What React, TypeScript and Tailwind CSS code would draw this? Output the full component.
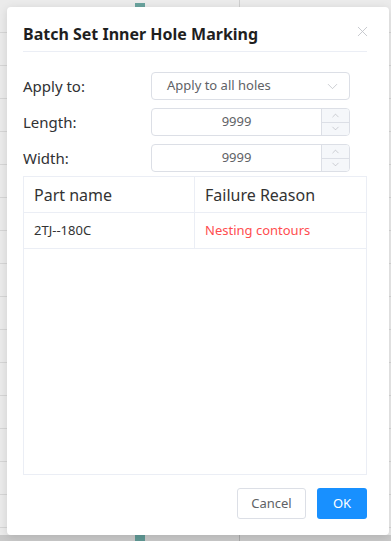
import { ChevronDown, ChevronUp, X } from 'lucide-react';

const font = { fontFamily: '"Noto Sans", "Open Sans", Arial, sans-serif' };

function NumberInput({ value }: { value: string }) {
  return (
    <div className="flex h-[28px] w-[199px] overflow-hidden rounded-[4px] border border-[#dcdfe6] bg-white">
      <div className="flex flex-1 items-center justify-center text-[13px] text-[#606266]">{value}</div>
      <div className="flex w-[28px] flex-col border-l border-[#dcdfe6] bg-[#f5f7fa] text-[#a8abb2]">
        <div className="flex flex-1 items-center justify-center border-b border-[#dcdfe6]">
          <ChevronUp size={11} strokeWidth={1.2} />
        </div>
        <div className="flex flex-1 items-center justify-center">
          <ChevronDown size={11} strokeWidth={1.2} />
        </div>
      </div>
    </div>
  );
}

export default function App() {
  return (
    <div
      className="relative h-[541px] w-[391px] overflow-hidden bg-[repeating-linear-gradient(to_bottom,#ebebeb_0px,#ebebeb_32px,#d6d6d6_32px,#d6d6d6_33px)] pl-[7px] pt-[7px]"
      style={font}
    >
      <div className="absolute left-[135px] top-[3px] h-[4px] w-[10px] bg-[#6aa39e]" />
      <div className="absolute left-[239px] top-0 h-[7px] w-px bg-[#cfcfcf]" />
      <div className="absolute bottom-0 left-0 h-[6px] w-full bg-[#c9c9c9]" />
      <div className="absolute bottom-0 left-[135px] h-[6px] w-[10px] bg-[#5f9894]" />
      <div className="absolute bottom-0 left-[239px] h-[6px] w-px bg-[#a9a9a9]" />

      <div className="relative flex h-[528px] w-[382px] flex-col rounded-[4px] bg-white pl-4 pr-[22px] shadow-[0_2px_10px_rgba(0,0,0,0.12)]">
        <div className="flex items-center justify-between pt-4 pb-[6px]">
          <h3 className="text-[16px] font-bold leading-[22px] text-[#1f1f1f]">Batch Set Inner Hole Marking</h3>
          <X size={17} strokeWidth={1.2} className="mr-[-4px] mt-[-5px] text-[#bfc2c8]" />
        </div>
        <div className="h-px bg-[#ebeef5]" />

        <div className="mt-[20px] flex flex-col gap-[8px]">
          <div className="flex items-center">
            <label className="w-[128px] text-[15px] text-[#303133]">Apply to:</label>
            <div className="flex h-[28px] w-[199px] items-center justify-between rounded-[4px] border border-[#dcdfe6] pl-[15px] pr-[8px]">
              <span className="text-[13px] text-[#606266]">Apply to all holes</span>
              <ChevronDown size={17} strokeWidth={1} className="text-[#b8bbc1]" />
            </div>
          </div>
          <div className="flex items-center">
            <label className="w-[128px] text-[15px] text-[#303133]">Length:</label>
            <NumberInput value="9999" />
          </div>
          <div className="flex items-center">
            <label className="w-[128px] text-[15px] text-[#303133]">Width:</label>
            <NumberInput value="9999" />
          </div>
        </div>

        <div className="mt-[4px] flex h-[299px] flex-col border border-[#ebeef5]">
          <div className="flex h-[36px] border-b border-[#ebeef5] text-[16px] text-[#333]">
            <div className="flex w-[171px] items-center border-r border-[#ebeef5] pl-[10px]">Part name</div>
            <div className="flex flex-1 items-center pl-[10px]">Failure Reason</div>
          </div>
          <div className="flex h-[36px] border-b border-[#ebeef5] text-[13px]">
            <div className="flex w-[171px] items-center border-r border-[#ebeef5] pl-[10px] text-[#333]">2TJ--180C</div>
            <div className="flex flex-1 items-center pl-[10px] text-[#ff4d4f]">Nesting contours</div>
          </div>
        </div>

        <div className="mt-[13px] flex justify-end gap-[11px]">
          <button className="h-[31px] w-[69px] rounded-[3px] border border-[#dcdfe6] bg-white text-[13px] text-[#606266]">
            Cancel
          </button>
          <button className="h-[31px] w-[50px] rounded-[3px] bg-[#1890ff] text-[13px] text-white">OK</button>
        </div>
      </div>
    </div>
  );
}
